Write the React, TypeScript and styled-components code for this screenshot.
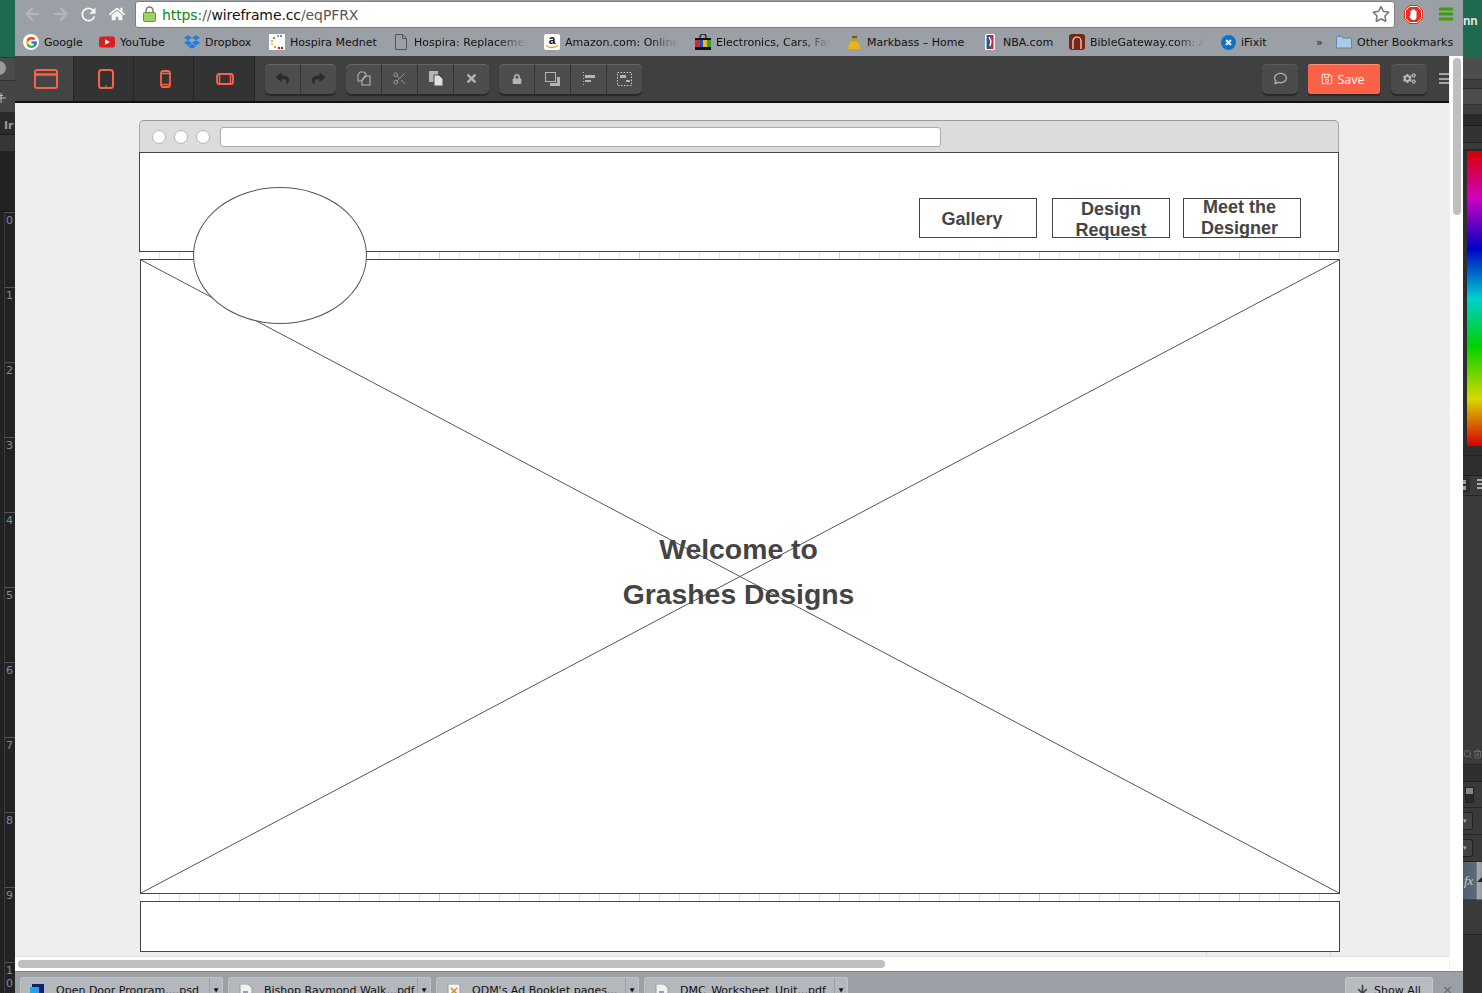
import React from "react";
import styled, { createGlobalStyle } from "styled-components";
import {
  FaArrowDown,
  FaArrowLeft,
  FaArrowRight,
  FaCogs,
  FaDropbox,
  FaHome,
  FaLock,
  FaRegComment,
  FaRegSave,
  FaRegStar,
  FaReply,
  FaShare,
  FaTimes,
} from "react-icons/fa";
import { FcGoogle } from "react-icons/fc";
import { MdRefresh } from "react-icons/md";
import { Scissors, Search, Trash2 } from "lucide-react";

const GlobalStyle = createGlobalStyle`
  html, body {
    margin: 0;
    padding: 0;
    background: #333;
    overflow: hidden;
  }
  * {
    box-sizing: border-box;
  }
`;

const Page = styled.div`
  display: grid;
  grid-template-columns: 15px 1448px 19px;
  width: 1482px;
  height: 993px;
  overflow: hidden;
  font-family: "DejaVu Sans", sans-serif;
`;

/* desktop behind the browser */
const LeftStrip = styled.div`
  display: flex;
  flex-direction: column;
  height: 993px;
  background: #222;
  overflow: hidden;
`;

const Slab = styled.div<{ $h: number; $bg: string }>`
  flex: none;
  height: ${(p) => p.$h}px;
  background: ${(p) => p.$bg};
  border-bottom: 1px solid rgba(0, 0, 0, 0.35);
  overflow: hidden;
`;

const LeftLabel = styled(Slab)`
  padding: 6px 0 0 4px;
  font: bold 11px "DejaVu Sans", sans-serif;
  color: #9a9a9a;
`;

const CircleSlab = styled(Slab)`
  padding-top: 3px;
`;

const Knob = styled.div`
  width: 14px;
  height: 14px;
  margin-left: -8px;
  border-radius: 50%;
  background: #9a9a9a;
`;

const MoveSlab = styled(Slab)`
  padding: 11px 0 0 0;
  color: #bbb;
  line-height: 0;
`;

const RulerCell = styled.div<{ $h?: number }>`
  flex: none;
  height: ${(p) => p.$h ?? 75}px;
  margin-left: 4px;
  padding: 1px 0 0 1px;
  border-top: 1px solid #555;
  border-left: 1px solid #3a3a3a;
  font-size: 11px;
  line-height: 13px;
  color: #7b8c9d;
`;

const RightStrip = styled.div`
  display: flex;
  flex-direction: column;
  height: 993px;
  background: #333;
  overflow: hidden;
`;

const GreenTop = styled.div`
  flex: none;
  height: 58px;
  padding-top: 14px;
  background: #1d6a4e;
  font: bold 12px "Liberation Sans", sans-serif;
  color: #e8e8e8;
`;

const HueWrap = styled.div`
  flex: none;
  height: 306px;
  padding: 1px 0 9px 4px;
  background: #2e2e2e;
  border-bottom: 1px solid #222;
`;

const HueBar = styled.div`
  height: 100%;
  background: linear-gradient(
    #d80000,
    #d000c0 16%,
    #0000c4 33%,
    #00d0d0 50%,
    #00d000 66%,
    #d8d800 84%,
    #d80000
  );
`;

const ButtonSlab = styled(Slab)`
  display: flex;
  justify-content: space-between;
  padding-top: 1px;
`;

const LayerButton = styled.div`
  width: 7px;
  height: 16px;
  padding-top: 3px;
  background: #2c2c2c;
  border-radius: 0 3px 3px 0;
`;

const LayerSquares = styled.div`
  width: 3px;
  height: 10px;
  background: repeating-linear-gradient(#999 0 4px, transparent 4px 6px);
`;

const LayerLines = styled.div`
  width: 5px;
  height: 11px;
  margin-top: 2px;
  background: repeating-linear-gradient(#aaa 0 2px, transparent 2px 4px);
`;

const TrayIcons = styled(Slab)`
  display: flex;
  align-items: flex-end;
  justify-content: space-between;
  padding-bottom: 4px;
  color: #777;
`;

const SliderSlab = styled(Slab)`
  padding: 5px 0 0 2px;
`;

const SliderKnob = styled.div`
  width: 9px;
  height: 16px;
  background: linear-gradient(#888 0 45%, #2a2a2a 45%);
  border: 1px solid #222;
`;

const DropSlab = styled(Slab)`
  padding-top: 4px;
`;

const DropTab = styled.div`
  width: 10px;
  height: 18px;
  background: #444;
  border: 1px solid #222;
  border-left: 0;
  border-radius: 0 3px 3px 0;
  font-size: 7px;
  line-height: 16px;
  color: #aaa;
`;

const FxSlab = styled(Slab)`
  display: flex;
  justify-content: space-between;
  padding: 11px 0 0 1px;
  background: linear-gradient(90deg, #4f5f70, #5c6b7a 70%, #aaacae 75%, #96989a);
  font: italic 13px "Liberation Serif", serif;
  color: #ccc;
`;

const FxArrow = styled.span`
  width: 0;
  height: 0;
  margin-top: 4px;
  border-left: 5px solid transparent;
  border-bottom: 5px solid #222;
`;

/* browser frame */
const Browser = styled.div`
  display: flex;
  flex-direction: column;
  height: 993px;
  min-width: 0;
`;

const ChromeBar = styled.div`
  flex: none;
  display: flex;
  align-items: center;
  height: 28px;
  padding-left: 3px;
  background: #9aa0a6;
`;

const NavButton = styled.div<{ $dim?: boolean; $left?: number }>`
  flex: none;
  display: flex;
  align-items: center;
  justify-content: center;
  width: 28.5px;
  padding-right: ${(p) => p.$left ?? 0}px;
  font-size: 16px;
  color: ${(p) => (p.$dim ? "#b1b6bb" : "#f6f6f6")};
`;

const Omnibox = styled.div`
  flex: 1;
  display: flex;
  align-items: center;
  gap: 6px;
  height: 27px;
  margin-left: 3px;
  padding: 0 4px 0 7px;
  background: #fff;
  border: 1px solid #7b7f83;
  border-radius: 3px;
  font-size: 14px;
  color: #111;
`;

const Url = styled.span`
  flex: 1;
  padding-top: 1px;
  letter-spacing: -0.1px;
`;

const Secure = styled.span`
  color: #0b8a18;
`;

const UrlPath = styled.span`
  color: #555;
`;

const Extras = styled.div`
  flex: none;
  display: flex;
  align-items: center;
  gap: 16px;
  width: 68px;
  padding-left: 9px;
`;

const Bookmarks = styled.div`
  flex: none;
  display: flex;
  align-items: center;
  height: 28px;
  padding-left: 8px;
  background: #9aa0a6;
  overflow: hidden;
`;

const Mark = styled.div<{ $w?: number }>`
  flex: none;
  display: flex;
  align-items: center;
  gap: 5px;
  width: ${(p) => (p.$w ? `${p.$w}px` : "auto")};
  font-size: 11px;
  color: #111;
  white-space: nowrap;
`;

const MarkIcon = styled.span`
  flex: none;
  display: flex;
  align-items: center;
  justify-content: center;
  width: 16px;
  height: 16px;
  font-size: 16px;
`;

const GoogleDisc = styled.span`
  display: flex;
  align-items: center;
  justify-content: center;
  width: 16px;
  height: 16px;
  font-size: 13px;
  background: #fff;
  border-radius: 50%;
`;

const MarkLabel = styled.span<{ $fade?: number }>`
  overflow: hidden;
  ${(p) =>
    p.$fade
      ? `max-width: ${p.$fade}px;
         -webkit-mask-image: linear-gradient(90deg, #000 75%, transparent);
         mask-image: linear-gradient(90deg, #000 75%, transparent);`
      : ""}
`;

const Chevrons = styled.div`
  flex: none;
  width: 20px;
  font-size: 11px;
  color: #222;
`;

const MainRow = styled.div`
  flex: 1;
  display: grid;
  grid-template-columns: 1434px 14px;
  min-height: 0;
`;

const MainColumn = styled.div`
  display: flex;
  flex-direction: column;
  min-width: 0;
`;

/* wireframe.cc toolbar */
const AppToolbar = styled.div`
  flex: none;
  display: flex;
  align-items: stretch;
  height: 47px;
  background: #404040;
  border-bottom: 2px solid #111;
  overflow: hidden;
`;

const DeviceTab = styled.div<{ $w: number; $nudge: number; $active?: boolean }>`
  flex: none;
  display: flex;
  align-items: center;
  justify-content: center;
  width: ${(p) => p.$w}px;
  padding-left: ${(p) => p.$nudge}px;
  background: ${(p) => (p.$active ? "#444" : "#333")};
  border-right: 1px solid #242424;
`;

const ToolGroups = styled.div`
  display: flex;
  align-items: center;
  gap: 10px;
  margin-left: 10px;
`;

const ToolGroup = styled.div<{ $w: number }>`
  display: flex;
  width: ${(p) => p.$w}px;
  height: 30px;
  background: #4d4d4d;
  border-radius: 5px;
  box-shadow: 0 1px 0 #666 inset, 0 2px 1px #292929;
`;

const ToolButton = styled.div<{ $dark?: boolean }>`
  flex: 1;
  display: flex;
  align-items: center;
  justify-content: center;
  font-size: 13px;
  color: ${(p) => (p.$dark ? "#2b2b2b" : "#b5b5b5")};
  & + & {
    border-left: 1px solid #353535;
  }
`;

const ToolRight = styled.div`
  display: flex;
  align-items: center;
  margin-left: auto;
`;

const RoundButton = styled.div<{ $left: number }>`
  display: flex;
  align-items: center;
  justify-content: center;
  width: 36px;
  height: 30px;
  margin-left: ${(p) => p.$left}px;
  background: #4b4b4b;
  border-radius: 5px;
  box-shadow: 0 1px 0 #5c5c5c inset, 0 2px 1px #292929;
  font-size: 13px;
  color: #b5b5b5;
`;

const SaveButton = styled.div`
  display: flex;
  align-items: center;
  justify-content: center;
  gap: 4px;
  width: 72px;
  height: 30px;
  margin-left: 10px;
  padding: 1px 2px 0 0;
  background: #fb6248;
  border-radius: 3px;
  box-shadow: 0 1px 0 #ff8d78 inset, 0 2px 1px #292929;
  font: 12.5px "Open Sans", sans-serif;
  color: #fff;
`;

const SaveGlyph = styled.span`
  display: flex;
  font-size: 12px;
  color: #fbd2ca;
`;

const MenuLines = styled.div`
  flex: none;
  width: 10px;
  height: 11px;
  margin-left: 12px;
  background: repeating-linear-gradient(#a5a5a5 0 2px, transparent 2px 4.5px);
`;

/* canvas */
const Canvas = styled.div`
  flex: none;
  height: 854px;
  padding: 17px 0 0 124px;
  background:
    linear-gradient(#d6d6d6, #d6d6d6) 1191px 100% / 1px 4px no-repeat,
    linear-gradient(#d6d6d6, #d6d6d6) 1315px 100% / 1px 4px no-repeat,
    #eee;
  border-bottom: 1px solid #e2e2e2;
`;

const WindowFrame = styled.div`
  position: relative;
  width: 1201px;
`;

const TitleBar = styled.div`
  display: flex;
  align-items: center;
  width: 1200px;
  height: 32px;
  padding: 0 0 0 12px;
  background: #dcdcdc;
  border: 1px solid #a8a8a8;
  border-top-color: #999;
  border-bottom: 0;
  border-radius: 5px 5px 0 0;
`;

const Dot = styled.span`
  flex: none;
  width: 14px;
  height: 14px;
  margin-right: 8px;
  background: #fff;
  border: 1px solid #b5b5b5;
  border-radius: 50%;
`;

const AddressField = styled.div`
  width: 721px;
  height: 20px;
  margin-left: 2px;
  background: #fff;
  border: 1px solid #aaa;
  border-radius: 3px;
`;

const HeaderBlock = styled.div`
  display: flex;
  justify-content: flex-end;
  width: 1200px;
  height: 100px;
  padding: 45px 37px 0 0;
  background: #fff;
  border: 1px solid #444;
`;

const NavBox = styled.div<{ $left?: number; $shift?: number }>`
  display: flex;
  align-items: center;
  justify-content: center;
  width: 118px;
  height: 40px;
  margin-left: ${(p) => p.$left ?? 0}px;
  padding-right: ${(p) => p.$shift ?? 0}px;
  background: #fff;
  border: 1px solid #444;
  font: bold 18px/21px "Liberation Sans", sans-serif;
  color: #444;
  text-align: center;
`;

const NavText = styled.span<{ $nudge: number }>`
  transform: translateY(${(p) => p.$nudge}px);
`;

const TickGap = styled.div`
  width: 1200px;
  height: 7px;
  background:
    repeating-linear-gradient(90deg, #cfcfcf 0 1px, transparent 1px 200px) 100px 0,
    repeating-linear-gradient(90deg, #e4e4e4 0 1px, transparent 1px 20px),
    #fff;
`;

const HeroBlock = styled.div`
  position: relative;
  display: flex;
  align-items: center;
  justify-content: center;
  width: 1200px;
  height: 635px;
  margin-left: 1px;
  padding-bottom: 10px;
  background: #fff;
  border: 1px solid #444;
`;

const CrossLines = styled.svg`
  position: absolute;
  inset: 0;
  width: 100%;
  height: 100%;
`;

const HeroText = styled.h1`
  position: relative;
  margin: 0 3px 0 0;
  font: bold 28.35px/45px "Liberation Sans", sans-serif;
  color: #444;
  text-align: center;
`;

const FootBlock = styled.div`
  width: 1200px;
  height: 51px;
  margin-left: 1px;
  background: #fff;
  border: 1px solid #444;
`;

const LogoEllipse = styled.div`
  position: absolute;
  left: 54px;
  top: 67px;
  width: 174px;
  height: 137px;
  background: #fff;
  border: 1px solid #555;
  border-radius: 50%;
`;

/* scrollbars */
const HScroll = styled.div`
  flex: 1;
  padding: 3px 0 0 3px;
  background: #fff;
`;

const HThumb = styled.div`
  width: 867px;
  height: 8px;
  background: #bfbfbf;
  border-radius: 4px;
`;

const VScroll = styled.div`
  padding: 2px 3px 0;
  background: #fff;
  border-left: 1px solid #f1f1f1;
`;

const VThumb = styled.div`
  width: 8px;
  height: 157px;
  background: #bfbfbf;
  border-radius: 4px;
`;

/* downloads */
const Shelf = styled.div`
  flex: none;
  display: flex;
  align-items: flex-end;
  gap: 5px;
  height: 22px;
  padding-left: 5px;
  background: #9aa0a6;
  border-top: 1px solid #7f8489;
  overflow: hidden;
`;

const Download = styled.div<{ $w: number }>`
  flex: none;
  display: flex;
  height: 16px;
  width: ${(p) => p.$w}px;
  background: #b4b8bd;
  border: 1px solid #c0c4c8;
  border-bottom: 0;
  border-radius: 3px 3px 0 0;
  font-size: 11px;
  color: #111;
  white-space: nowrap;
`;

const DownloadMain = styled.div`
  flex: 1;
  display: flex;
  gap: 10px;
  padding: 6px 0 0 9px;
  overflow: hidden;
`;

const DownloadGlyph = styled.span`
  flex: none;
  display: flex;
  justify-content: center;
  width: 16px;
  height: 16px;
`;

const DownloadCaret = styled.div`
  flex: none;
  width: 13px;
  padding-top: 8px;
  border-left: 1px solid #9aa0a6;
  font-size: 6px;
  text-align: center;
`;

const ShowAll = styled.div`
  flex: none;
  display: flex;
  gap: 6px;
  justify-content: center;
  width: 88px;
  height: 16px;
  margin-left: auto;
  padding-top: 6px;
  background: #b8bcc1;
  border: 1px solid #c4c8cc;
  border-bottom: 0;
  border-radius: 3px 3px 0 0;
  font-size: 11px;
  color: #111;
`;

const ShelfClose = styled.div`
  flex: none;
  width: 25px;
  height: 14px;
  padding: 4px 0 0 4px;
  font-size: 13px;
  line-height: 13px;
  color: #666;
`;

const CORAL = "#fb6248";

const DesktopIcon = () => (
  <svg width="24" height="20" viewBox="0 0 24 20" fill="none" stroke={CORAL} strokeWidth="2">
    <rect x="1" y="1" width="22" height="18" rx="2" />
    <path d="M1 5.500h22" strokeWidth="2.500" />
  </svg>
);

const TabletIcon = () => (
  <svg width="16" height="20" viewBox="0 0 16 20" fill="none" stroke={CORAL} strokeWidth="2">
    <rect x="1" y="1" width="14" height="18" rx="2.500" />
    <path d="M7 17h2" strokeWidth="1" />
  </svg>
);

const PhoneIcon = () => (
  <svg width="11" height="18" viewBox="0 0 11 18" fill="#333" stroke={CORAL} strokeWidth="1.800">
    <rect x="1" y="1" width="9" height="16" rx="2" />
    <path d="M1 3.500h9M1 14.500h9" strokeWidth="1.500" />
  </svg>
);

const LandscapeIcon = () => (
  <svg width="18" height="12" viewBox="0 0 18 12" fill="#333" stroke={CORAL} strokeWidth="1.800">
    <rect x="1" y="1" width="16" height="10" rx="2" />
    <path d="M3.500 1v10M14.500 1v10" strokeWidth="1.500" />
  </svg>
);

const CopyIcon = () => (
  <svg width="14" height="15" viewBox="0 0 14 15" fill="none" stroke="#b5b5b5" strokeWidth="1.100">
    <path d="M3 1h4l2 2v2L4.500 10H1V4z" />
    <path d="M8 5h5v9H5v-5z" />
  </svg>
);

const PasteIcon = () => (
  <svg width="14" height="15" viewBox="0 0 14 15" fill="#b5b5b5">
    <rect x="0" y="0" width="9" height="11" />
    <path d="M5 4h5l4 4v7H5z" fill="#e0e0e0" stroke="#4d4d4d" />
  </svg>
);

const FrontIcon = () => (
  <svg width="15" height="14" viewBox="0 0 15 14" fill="none" stroke="#b5b5b5">
    <rect x="0.500" y="0.500" width="10" height="9" />
    <path d="M12 5h3v9H5v-3h7z" fill="#b5b5b5" stroke="none" />
  </svg>
);

const AlignIcon = () => (
  <svg width="12" height="14" viewBox="0 0 12 14" fill="#b5b5b5">
    <path d="M0 0h1v1H0zM0 3h1v1H0zM0 6h1v1H0zM0 9h1v1H0zM0 12h1v1H0z" />
    <rect x="2" y="3" width="10" height="3" />
    <rect x="2" y="8" width="6" height="2" />
  </svg>
);

const GroupIcon = () => (
  <svg width="15" height="14" viewBox="0 0 15 14" fill="#b5b5b5">
    <rect x="0.500" y="0.500" width="14" height="13" fill="none" stroke="#c8c8c8" strokeDasharray="1.500 1.500" />
    <rect x="3" y="3" width="6" height="3" />
    <rect x="9" y="8" width="4" height="2" />
  </svg>
);

const MoveIcon = () => (
  <svg width="6" height="12" viewBox="0 0 6 12" fill="none" stroke="#bbb">
    <path d="M0 6h6M1 1v10M-2 3.500h5" />
  </svg>
);

const PadlockIcon = () => (
  <svg width="13" height="16" viewBox="0 0 13 16">
    <path d="M3 7V4.500a3.500 3.500 0 0 1 7 0V7" fill="none" stroke="#777" strokeWidth="1.500" />
    <rect x="0.500" y="6.500" width="12" height="9" rx="1" fill="#9fd16a" stroke="#5f9a2c" />
  </svg>
);

const YoutubeIcon = () => (
  <svg width="16" height="12" viewBox="0 0 16 12">
    <rect width="16" height="11" y="0.500" rx="2.500" fill="#d8201f" />
    <path d="M6 3.200v5.600L11 6z" fill="#fff" />
  </svg>
);

const HospiraIcon = () => (
  <svg width="16" height="16" viewBox="0 0 16 16">
    <rect width="16" height="16" fill="#fff" />
    <circle cx="9" cy="2" r="0.900" fill="#7a5ca8" />
    <circle cx="12" cy="2" r="0.900" fill="#3c3c8c" />
    <circle cx="5" cy="4" r="1" fill="#2b8a3e" />
    <circle cx="3" cy="7" r="1" fill="#e0a010" />
    <circle cx="3" cy="10" r="1" fill="#e8c810" />
    <circle cx="6" cy="13" r="1" fill="#e08010" />
    <circle cx="10" cy="14" r="1.200" fill="#d02020" />
    <circle cx="13" cy="14" r="1.200" fill="#c01818" />
  </svg>
);

const DocIcon = () => (
  <svg width="12" height="16" viewBox="0 0 12 16" fill="none" stroke="#555">
    <path d="M.5.5h7l4 4v11H.5zM7.5.5v4h4" />
  </svg>
);

const AmazonIcon = () => (
  <svg width="16" height="16" viewBox="0 0 16 16">
    <rect width="16" height="16" rx="2" fill="#fff" />
    <text x="8" y="10" textAnchor="middle" fontFamily="Liberation Sans" fontWeight="bold" fontSize="12" fill="#111">
      a
    </text>
    <path d="M2 11.500c3.500 2.500 8 2.500 12 0" fill="none" stroke="#f39a1f" strokeWidth="1.400" />
  </svg>
);

const BagIcon = () => (
  <svg width="16" height="16" viewBox="0 0 16 16">
    <path d="M5 5V3a3 3 0 0 1 6 0v2" fill="none" stroke="#111" strokeWidth="1.200" />
    <rect y="4" width="16" height="12" fill="#111" />
    <rect y="6" width="5" height="7" fill="#d8252a" />
    <rect x="5" y="6" width="3" height="7" fill="#1b4fc4" />
    <rect x="8" y="6" width="4" height="7" fill="#f3b512" />
    <rect x="12" y="6" width="4" height="7" fill="#3c9a2d" />
  </svg>
);

const MarkbassIcon = () => (
  <svg width="16" height="16" viewBox="0 0 16 16">
    <path d="M1 15l3-7 4-1 4 1 3 7z" fill="#e8b31e" />
    <circle cx="8.500" cy="4" r="3" fill="#c29a1a" />
    <path d="M6 3h5" stroke="#333" strokeWidth="1.200" />
  </svg>
);

const NbaIcon = () => (
  <svg width="10" height="16" viewBox="0 0 10 16">
    <rect width="10" height="16" rx="1.500" fill="#fff" />
    <path d="M1.500 1h3.500v14H1.500z" fill="#2a55a5" />
    <path d="M5 1h3.500v14H5z" fill="#d0243c" />
    <path d="M4 3l2 4-1 5" stroke="#fff" strokeWidth="1.400" fill="none" />
  </svg>
);

const BibleIcon = () => (
  <svg width="16" height="16" viewBox="0 0 16 16">
    <rect width="16" height="16" rx="3" fill="#7a2415" />
    <path d="M4 15V7a4 4 0 0 1 8 0v8" fill="none" stroke="#f3e6d8" strokeWidth="1.200" />
  </svg>
);

const IfixitIcon = () => (
  <svg width="15" height="15" viewBox="0 0 15 15">
    <circle cx="7.500" cy="7.500" r="7.500" fill="#0a70c8" />
    <path d="M5 5l5 5M10 5l-5 5" stroke="#dfe8f0" strokeWidth="2.200" />
  </svg>
);

const FolderIcon = () => (
  <svg width="16" height="14" viewBox="0 0 16 14">
    <path d="M.5 2.500a1 1 0 0 1 1-1h4l1.500 1.500h7.500a1 1 0 0 1 1 1v9h-15z" fill="#a8cbe8" stroke="#5c88ad" />
  </svg>
);

const AdblockIcon = () => (
  <svg width="19" height="19" viewBox="0 0 19 19">
    <path d="M5.600 0h7.800L19 5.600v7.800L13.400 19H5.600L0 13.400V5.600z" fill="#e03125" />
    <path d="M5.600 1.500h7.800l4.100 4.100v7.800l-4.100 4.100H5.600l-4.100-4.100V5.600z" fill="none" stroke="#fff" />
    <path d="M6.500 10V6a.8.8 0 0 1 1.500 0V4.800a.8.8 0 0 1 1.500 0V5a.8.8 0 0 1 1.500 0v1a.8.8 0 0 1 1.500 0v6a3 3 0 0 1-3 3H9c-1.500 0-3-2-3.500-3.500z" fill="#fff" />
  </svg>
);

const ChromeMenu = () => (
  <svg width="14" height="14" viewBox="0 0 14 14" fill="#3f9c0a">
    <rect y="0.500" width="14" height="3" />
    <rect y="5.500" width="14" height="3" />
    <rect y="10.500" width="14" height="3" />
  </svg>
);

const PsdIcon = () => (
  <svg width="16" height="16" viewBox="0 0 16 16">
    <rect x="2" width="12" height="16" fill="#12206b" />
    <rect x="0" y="3" width="9" height="6" fill="#22a5e8" />
  </svg>
);

const PdfIcon = () => (
  <svg width="14" height="16" viewBox="0 0 14 16">
    <path d="M1 0h8l4 4v12H1z" fill="#f1f1f1" stroke="#999" />
    <rect x="4" y="7" width="5" height="4" fill="#8aa4c8" />
  </svg>
);

const NoteIcon = () => (
  <svg width="14" height="16" viewBox="0 0 14 16">
    <path d="M1 0h12v16H1z" fill="#f4f4f4" stroke="#999" />
    <path d="M4 4l6 6M4 10l6-6" stroke="#d88a1c" strokeWidth="1.500" />
  </svg>
);

const bookmarks = [
  { w: 76, icon: <GoogleDisc><FcGoogle /></GoogleDisc>, label: "Google" },
  { w: 85, icon: <YoutubeIcon />, label: "YouTube" },
  { w: 85, icon: <FaDropbox color="#1e7de0" />, label: "Dropbox" },
  { w: 124, icon: <HospiraIcon />, label: "Hospira Mednet" },
  { w: 151, icon: <DocIcon />, label: "Hospira: Replacemen", fade: 113 },
  { w: 151, icon: <AmazonIcon />, label: "Amazon.com: Online", fade: 115 },
  { w: 151, icon: <BagIcon />, label: "Electronics, Cars, Fas", fade: 115 },
  { w: 136, icon: <MarkbassIcon />, label: "Markbass – Home" },
  { w: 87, icon: <NbaIcon />, label: "NBA.com" },
  { w: 151, icon: <BibleIcon />, label: "BibleGateway.com: A", fade: 114 },
  { w: 96, icon: <IfixitIcon />, label: "iFixit" },
];

const downloads = [
  { w: 203, icon: <PsdIcon />, name: "Open Door Program....psd" },
  { w: 203, icon: <PdfIcon />, name: "Bishop Raymond Walk...pdf" },
  { w: 203, icon: <NoteIcon />, name: "ODM's Ad Booklet pages..." },
  { w: 204, icon: <PdfIcon />, name: "DMC_Worksheet_Unit...pdf" },
];

const App = () => {
  return (
    <Page>
      <GlobalStyle />
      <LeftStrip>
        <Slab $h={58} $bg="#1d6a4e" />
        <CircleSlab $h={23} $bg="#4b4b4b">
          <Knob />
        </CircleSlab>
        <MoveSlab $h={32} $bg="#454545">
          <MoveIcon />
        </MoveSlab>
        <LeftLabel $h={22} $bg="#2a2a2a">Ir</LeftLabel>
        <Slab $h={17} $bg="#363636" />
        <Slab $h={60} $bg="#222" />
        {[0, 1, 2, 3, 4, 5, 6, 7, 8, 9].map((n) => (
          <RulerCell key={n}>{n}</RulerCell>
        ))}
        <RulerCell $h={31}>
          1
          <br />0
        </RulerCell>
      </LeftStrip>

      <Browser>
        <ChromeBar>
          <NavButton $dim>
            <FaArrowLeft />
          </NavButton>
          <NavButton $dim>
            <FaArrowRight />
          </NavButton>
          <NavButton $left={1}>
            <MdRefresh size={21} />
          </NavButton>
          <NavButton $left={2}>
            <FaHome />
          </NavButton>
          <Omnibox>
            <PadlockIcon />
            <Url>
              <Secure>https</Secure>
              <UrlPath>://</UrlPath>wireframe.cc<UrlPath>/eqPFRX</UrlPath>
            </Url>
            <FaRegStar color="#777" size={18} />
          </Omnibox>
          <Extras>
            <AdblockIcon />
            <ChromeMenu />
          </Extras>
        </ChromeBar>

        <Bookmarks>
          {bookmarks.map((b) => (
            <Mark key={b.label} $w={b.w}>
              <MarkIcon>{b.icon}</MarkIcon>
              <MarkLabel $fade={b.fade}>{b.label}</MarkLabel>
            </Mark>
          ))}
          <Chevrons>»</Chevrons>
          <Mark>
            <MarkIcon>
              <FolderIcon />
            </MarkIcon>
            <MarkLabel>Other Bookmarks</MarkLabel>
          </Mark>
        </Bookmarks>

        <MainRow>
          <MainColumn>
            <AppToolbar>
              <DeviceTab $w={59} $nudge={3} $active>
                <DesktopIcon />
              </DeviceTab>
              <DeviceTab $w={60} $nudge={4}>
                <TabletIcon />
              </DeviceTab>
              <DeviceTab $w={60} $nudge={3}>
                <PhoneIcon />
              </DeviceTab>
              <DeviceTab $w={61} $nudge={1}>
                <LandscapeIcon />
              </DeviceTab>
              <ToolGroups>
                <ToolGroup $w={71}>
                  <ToolButton $dark>
                    <FaReply />
                  </ToolButton>
                  <ToolButton $dark>
                    <FaShare />
                  </ToolButton>
                </ToolGroup>
                <ToolGroup $w={143}>
                  <ToolButton>
                    <CopyIcon />
                  </ToolButton>
                  <ToolButton>
                    <Scissors size={15} strokeWidth={1.5} color="#9a9a9a" />
                  </ToolButton>
                  <ToolButton>
                    <PasteIcon />
                  </ToolButton>
                  <ToolButton>
                    <FaTimes />
                  </ToolButton>
                </ToolGroup>
                <ToolGroup $w={143}>
                  <ToolButton>
                    <FaLock size={10} />
                  </ToolButton>
                  <ToolButton>
                    <FrontIcon />
                  </ToolButton>
                  <ToolButton>
                    <AlignIcon />
                  </ToolButton>
                  <ToolButton>
                    <GroupIcon />
                  </ToolButton>
                </ToolGroup>
              </ToolGroups>
              <ToolRight>
                <RoundButton $left={0}>
                  <FaRegComment />
                </RoundButton>
                <SaveButton>
                  <SaveGlyph>
                    <FaRegSave />
                  </SaveGlyph>
                  Save
                </SaveButton>
                <RoundButton $left={11}>
                  <FaCogs />
                </RoundButton>
                <MenuLines />
              </ToolRight>
            </AppToolbar>

            <Canvas>
              <WindowFrame>
                <TitleBar>
                  <Dot />
                  <Dot />
                  <Dot />
                  <AddressField />
                </TitleBar>
                <HeaderBlock>
                  <NavBox $shift={12}>
                    <NavText $nudge={1}>Gallery</NavText>
                  </NavBox>
                  <NavBox $left={15}>
                    <NavText $nudge={2}>
                      Design
                      <br />
                      Request
                    </NavText>
                  </NavBox>
                  <NavBox $left={13} $shift={5}>
                    <NavText $nudge={0}>
                      Meet the
                      <br />
                      Designer
                    </NavText>
                  </NavBox>
                </HeaderBlock>
                <TickGap />
                <HeroBlock>
                  <CrossLines viewBox="0 0 1198 633" preserveAspectRatio="none">
                    <path d="M0 0L1198 633M1198 0L0 633" stroke="#555" strokeWidth="1" fill="none" />
                  </CrossLines>
                  <HeroText>
                    Welcome to
                    <br />
                    Grashes Designs
                  </HeroText>
                </HeroBlock>
                <TickGap />
                <FootBlock />
                <LogoEllipse />
              </WindowFrame>
            </Canvas>
            <HScroll>
              <HThumb />
            </HScroll>
          </MainColumn>
          <VScroll>
            <VThumb />
          </VScroll>
        </MainRow>

        <Shelf>
          {downloads.map((d) => (
            <Download key={d.name} $w={d.w}>
              <DownloadMain>
                <DownloadGlyph>{d.icon}</DownloadGlyph>
                {d.name}
              </DownloadMain>
              <DownloadCaret>▼</DownloadCaret>
            </Download>
          ))}
          <ShowAll>
            <FaArrowDown size={11} color="#444" />
            Show All
          </ShowAll>
          <ShelfClose>×</ShelfClose>
        </Shelf>
      </Browser>

      <RightStrip>
        <GreenTop>nn</GreenTop>
        <Slab $h={22} $bg="#4d4d4d" />
        <Slab $h={9} $bg="#3e3e3e" />
        <Slab $h={16} $bg="#4d4d4d" />
        <Slab $h={10} $bg="#3d3d3d" />
        <Slab $h={11} $bg="#2b2b2b" />
        <Slab $h={17} $bg="#333" />
        <Slab $h={7} $bg="#3a3a3a" />
        <HueWrap>
          <HueBar />
        </HueWrap>
        <Slab $h={20} $bg="#2f2f2f" />
        <ButtonSlab $h={20} $bg="#3a3a3a">
          <LayerButton>
            <LayerSquares />
          </LayerButton>
          <LayerLines />
        </ButtonSlab>
        <TrayIcons $h={269} $bg="#3a3a3a">
          <Search size={12} />
          <Trash2 size={12} />
        </TrayIcons>
        <Slab $h={17} $bg="#2f2f2f" />
        <SliderSlab $h={26} $bg="#3a3a3a">
          <SliderKnob />
        </SliderSlab>
        <DropSlab $h={27} $bg="#3a3a3a">
          <DropTab>▾</DropTab>
        </DropSlab>
        <DropSlab $h={27} $bg="#3a3a3a">
          <DropTab>▾</DropTab>
        </DropSlab>
        <FxSlab $h={38} $bg="#52606e">
          fx
          <FxArrow />
        </FxSlab>
        <Slab $h={35} $bg="#3a3a3a" />
      </RightStrip>
    </Page>
  );
};

export default App;
